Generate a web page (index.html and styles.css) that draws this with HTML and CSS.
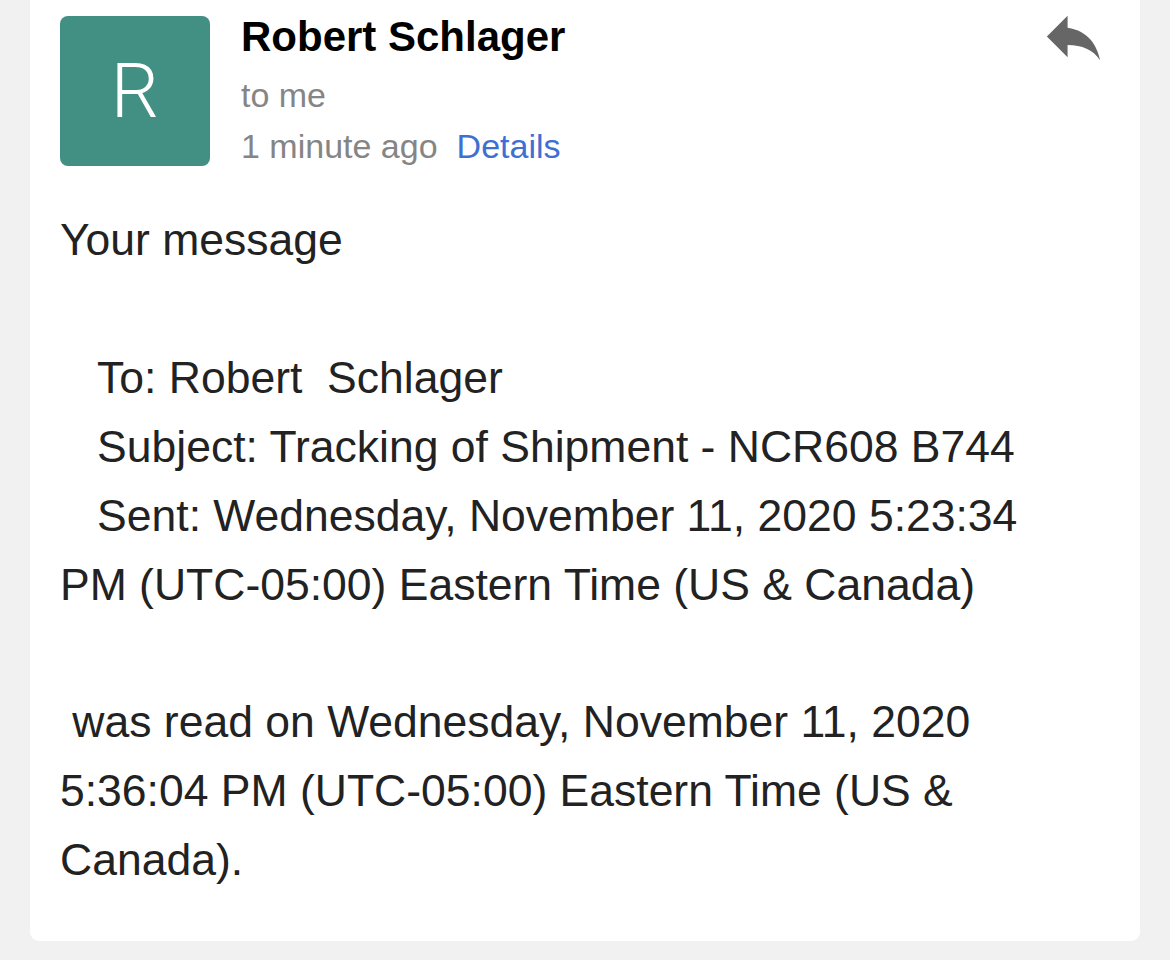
FILE: index.html
```html
<!DOCTYPE html>
<html>
<head>
<meta charset="utf-8">
<link rel="stylesheet" href="styles.css">
</head>
<body>
<div class="card">
  <div class="header">
    <div class="avatar">R</div>
    <div class="info">
      <div class="name">Robert Schlager</div>
      <div class="to">to me</div>
      <div class="time">1 minute ago<span class="details">Details</span></div>
    </div>
    <svg class="reply" viewBox="0 0 24 24" width="71" height="71"><path d="M10 9V5l-7 7 7 7v-4.1c5 0 8.5 1.6 11 5.1-1-5-4-10-11-11z"/></svg>
  </div>
  <div class="message">
    <div class="line">Your message</div>
    <div class="line">&nbsp;</div>
    <div class="line">&nbsp;&nbsp;&nbsp;To: Robert &nbsp;Schlager</div>
    <div class="line">&nbsp;&nbsp;&nbsp;Subject: Tracking of Shipment - NCR608 B744</div>
    <div class="line">&nbsp;&nbsp;&nbsp;Sent: Wednesday, November 11, 2020 5:23:34</div>
    <div class="line">PM (UTC-05:00) Eastern Time (US &amp; Canada)</div>
    <div class="line">&nbsp;</div>
    <div class="line">&nbsp;was read on Wednesday, November 11, 2020</div>
    <div class="line">5:36:04 PM (UTC-05:00) Eastern Time (US &amp;</div>
    <div class="line">Canada).</div>
  </div>
</div>
</body>
</html>
```
FILE: styles.css
```css
html, body {
  margin: 0;
  padding: 0;
  background: #f1f1f1;
}
body {
  padding: 0 30px;
  font-family: "Liberation Sans", Arial, sans-serif;
}
.card {
  width: 1110px;
  box-sizing: border-box;
  background: #ffffff;
  border-radius: 0 0 9px 9px;
  padding: 16px 30px 46px 30px;
}
.header {
  display: flex;
  align-items: flex-start;
}
.avatar {
  width: 150px;
  height: 150px;
  border-radius: 8px;
  background: #428f84;
  color: #ffffff;
  font-family: Roboto, "Liberation Sans", sans-serif;
  font-weight: 300;
  font-size: 76px;
  display: flex;
  align-items: center;
  justify-content: center;
  flex-shrink: 0;
}
.info {
  margin-left: 31px;
  margin-top: -3px;
}
.name {
  font-size: 42px;
  font-weight: bold;
  line-height: 48px;
  color: #000000;
}
.to, .time {
  font-size: 34px;
  line-height: 40px;
  color: #858585;
}
.to {
  margin-top: 14px;
}
.time {
  margin-top: 11px;
}
.details {
  color: #3e6fd2;
  margin-left: 19px;
}
.reply {
  margin-left: auto;
  margin-top: -15px;
  margin-right: 1px;
  fill: #666666;
}
.message {
  margin-top: 40px;
  font-size: 44.5px;
  line-height: 68.9px;
  color: #222222;
}
.line {
  white-space: nowrap;
}
```
